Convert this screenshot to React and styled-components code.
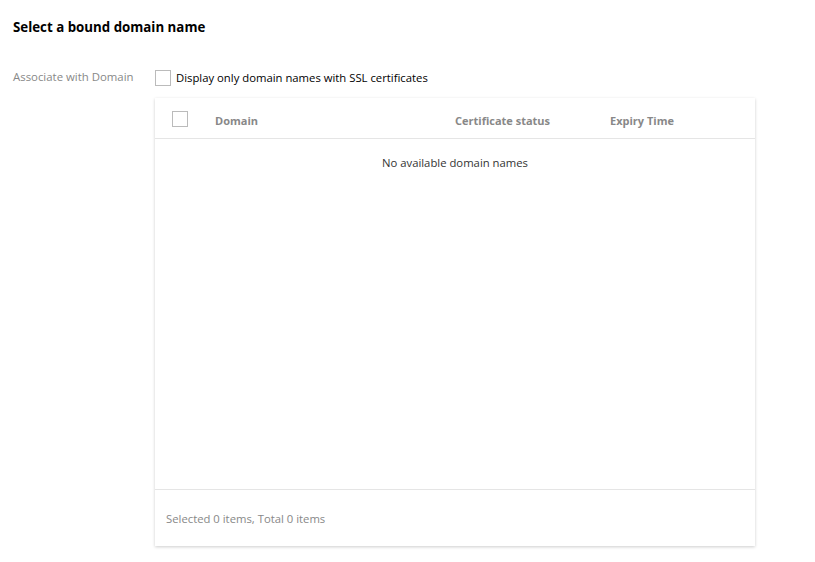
import styled, { createGlobalStyle } from "styled-components";

const GlobalStyle = createGlobalStyle`
  body {
    margin: 0;
    background: #fff;
    font-family: "Segoe UI", "Open Sans", "Noto Sans", sans-serif;
    color: #000;
  }
`;

const Page = styled.div`
  padding: 18px 13px;
`;

const Title = styled.h3`
  margin: 0;
  font-size: 13.3px;
  font-weight: bold;
  line-height: 18px;
  color: #000;
`;

const FormRow = styled.div`
  display: flex;
  margin-top: 33px;
`;

const Label = styled.div`
  width: 142px;
  font-size: 11.4px;
  color: #888;
  line-height: 16px;
`;

const Field = styled.div`
  display: flex;
  flex-direction: column;
`;

const CheckLabel = styled.label`
  display: flex;
  align-items: center;
  gap: 5px;
  font-size: 11.3px;
  color: #000;
  line-height: 16px;
  padding-top: 1px;
`;

const Box = styled.span`
  display: inline-block;
  flex-shrink: 0;
  width: 14px;
  height: 14px;
  border: 1px solid #bbb;
  background: #fff;
`;

const Card = styled.div`
  margin-top: 12px;
  width: 600px;
  height: 448px;
  background: #fff;
  box-shadow: 0 1px 3px rgba(0, 0, 0, 0.2);
  display: flex;
  flex-direction: column;
`;

const HeadRow = styled.div`
  display: grid;
  grid-template-columns: 60px 240px 155px 1fr;
  align-items: center;
  height: 40px;
  border-bottom: 1px solid #e5e5e5;
  font-size: 11px;
  font-weight: bold;
  color: #888;
`;

const HeadCell = styled.div`
  padding-left: ${(p) => p.$pad || 0}px;
  padding-top: ${(p) => (p.$pad ? 1 : 5)}px;
  display: flex;
  align-items: center;
`;

const Body = styled.div`
  flex: 1;
  text-align: center;
  font-size: 11.3px;
  color: #333;
  padding-top: 16px;
`;

const Footer = styled.div`
  height: 57px;
  flex-shrink: 0;
  border-top: 1px solid #e5e5e5;
  display: flex;
  align-items: center;
  padding-left: 11px;
  box-sizing: border-box;
  font-size: 11.3px;
  color: #888;
`;

export default function App() {
  return (
    <Page>
      <GlobalStyle />
      <Title>Select a bound domain name</Title>
      <FormRow>
        <Label>Associate with Domain</Label>
        <Field>
          <CheckLabel>
            <Box />
            Display only domain names with SSL certificates
          </CheckLabel>
          <Card>
            <HeadRow>
              <HeadCell $pad={17}>
                <Box />
              </HeadCell>
              <HeadCell>Domain</HeadCell>
              <HeadCell>Certificate status</HeadCell>
              <HeadCell>Expiry Time</HeadCell>
            </HeadRow>
            <Body>No available domain names</Body>
            <Footer>Selected 0 items, Total 0 items</Footer>
          </Card>
        </Field>
      </FormRow>
    </Page>
  );
}
